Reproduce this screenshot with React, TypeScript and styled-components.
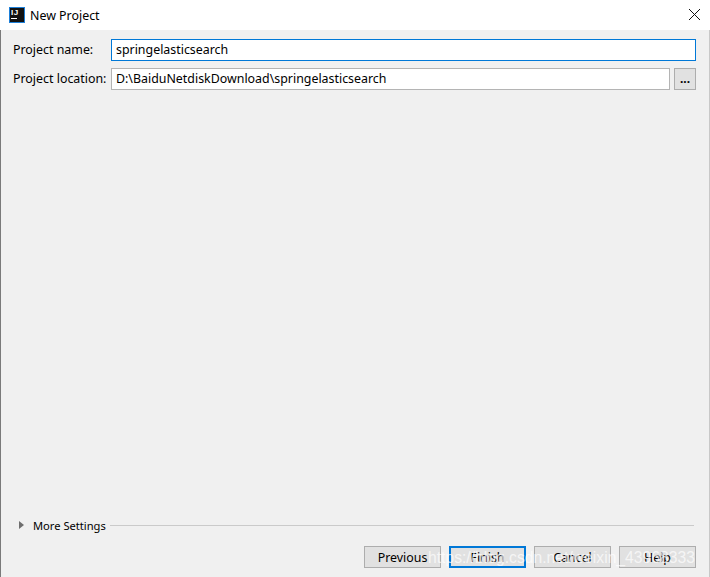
import React from 'react'
import styled, { createGlobalStyle } from 'styled-components'

const GlobalStyle = createGlobalStyle`
html, body {
    margin: 0;
    padding: 0;
    background: #f0f0f0;
}
#root {
    height: 577px;
}
`

const Dialog = styled.div`
    position: relative;
    box-sizing: border-box;
    width: 710px;
    height: 577px;
    display: flex;
    flex-direction: column;
    overflow: hidden;
    background: #f0f0f0;
    color: #000;
    font-family: "Noto Sans", "Open Sans", sans-serif;
    font-size: 12.4px;
`

const TitleBar = styled.div`
    flex: none;
    height: 30px;
    display: flex;
    align-items: center;
    padding-left: 9px;
    background: #fff;
`

const AppIcon = styled.div`
    box-sizing: border-box;
    width: 16px;
    height: 16px;
    margin-right: 5px;
    padding: 1px 0 0 1px;
    background: #111;
    border: 1px solid #1c7fd8;
    color: #fff;
    font-family: "Liberation Sans", sans-serif;
    font-size: 8px;
    font-weight: 700;
    line-height: 8px;
    letter-spacing: 0.5px;
`

const IconBar = styled.div`
    width: 6px;
    height: 1px;
    margin-top: 1px;
    background: #fff;
`

const Title = styled.div`
    flex: 1;
`

const CloseButton = styled.div`
    width: 32px;
    height: 30px;
    display: flex;
    align-items: center;
    justify-content: center;
    padding-bottom: 2px;
    box-sizing: border-box;
`

const Body = styled.div`
    flex: 1;
    display: flex;
    flex-direction: column;
    border-left: 1px solid #7a7a7a;
    border-right: 1px solid #c8c8c8;
    padding: 9px 13px 9px 12px;
`

const Row = styled.div`
    display: flex;
    align-items: center;
    height: 22px;
    margin-bottom: 7px;
`

const Label = styled.div`
    width: 98px;
    flex: none;
    padding-bottom: 2px;
`

const Field = styled.div<{ $focused?: boolean }>`
    flex: 1;
    box-sizing: border-box;
    height: 22px;
    display: flex;
    align-items: center;
    padding: 0 0 2px 4px;
    background: #fff;
    border: 1px solid ${p => (p.$focused ? '#0078d7' : '#b4b4b4')};
`

const BrowseButton = styled.div`
    flex: none;
    box-sizing: border-box;
    width: 22px;
    height: 22px;
    margin-left: 4px;
    display: flex;
    align-items: center;
    justify-content: center;
    padding-bottom: 1px;
    background: #e1e1e1;
    border: 1px solid #adadad;
    font-size: 12px;
    font-weight: 700;
`

const Spacer = styled.div`
    flex: 1;
`

const SettingsRow = styled.div`
    display: flex;
    align-items: center;
    height: 18px;
    margin: 0 2px 12px 6px;
`

const Triangle = styled.div`
    width: 0;
    height: 0;
    margin-right: 9px;
    border-style: solid;
    border-width: 4.5px 0 4.5px 5px;
    border-color: transparent transparent transparent #6e6e6e;
`

const SettingsLabel = styled.div`
    margin-right: 4px;
    font-size: 11.15px;
`

const Rule = styled.div`
    flex: 1;
    height: 1px;
    background: #cacaca;
`

const ButtonBar = styled.div`
    display: flex;
    justify-content: flex-end;
    gap: 8px;
`

const Button = styled.div<{ $primary?: boolean }>`
    box-sizing: border-box;
    width: 77px;
    height: 22px;
    display: flex;
    align-items: center;
    justify-content: center;
    background: #e1e1e1;
    border: ${p => (p.$primary ? '2px solid #0078d7' : '1px solid #adadad')};
`

const Watermark = styled.div`
    position: absolute;
    left: 428px;
    top: 549px;
    color: rgba(255, 255, 255, 0.7);
    font-family: "Liberation Sans", sans-serif;
    font-size: 15.7px;
    white-space: nowrap;
`

export default function App() {
    return (
        <>
            <GlobalStyle />
            <Dialog>
                <TitleBar>
                    <AppIcon>
                        IJ
                        <IconBar />
                    </AppIcon>
                    <Title>New Project</Title>
                    <CloseButton>
                        <svg width="13" height="13" viewBox="0 0 13 13">
                            <path d="M1 1l11 11M12 1L1 12" stroke="#111" strokeWidth="1" fill="none" />
                        </svg>
                    </CloseButton>
                </TitleBar>
                <Body>
                    <Row>
                        <Label>Project name:</Label>
                        <Field $focused>springelasticsearch</Field>
                    </Row>
                    <Row>
                        <Label>Project location:</Label>
                        <Field>D:\BaiduNetdiskDownload\springelasticsearch</Field>
                        <BrowseButton>...</BrowseButton>
                    </Row>
                    <Spacer />
                    <SettingsRow>
                        <Triangle />
                        <SettingsLabel>More Settings</SettingsLabel>
                        <Rule />
                    </SettingsRow>
                    <ButtonBar>
                        <Button>Previous</Button>
                        <Button $primary>Finish</Button>
                        <Button>Cancel</Button>
                        <Button>Help</Button>
                    </ButtonBar>
                </Body>
                <Watermark>https://blog.csdn.net/weixin_43968333</Watermark>
            </Dialog>
        </>
    )
}
